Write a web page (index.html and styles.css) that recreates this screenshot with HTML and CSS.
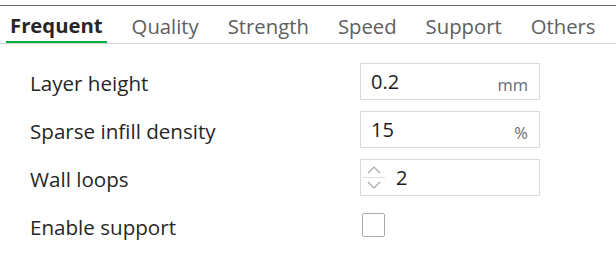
FILE: index.html
```html
<!DOCTYPE html>
<html>
<head>
<meta charset="utf-8">
<link rel="stylesheet" href="styles.css">
</head>
<body>
<div class="panel">
  <div class="topline"></div>
  <nav class="tabs">
    <div class="tab active">Frequent</div>
    <div class="tab">Quality</div>
    <div class="tab">Strength</div>
    <div class="tab">Speed</div>
    <div class="tab">Support</div>
    <div class="tab">Others</div>
  </nav>
  <div class="form">
    <div class="row">
      <div class="label">Layer height</div>
      <div class="field">
        <span class="value">0.2</span>
        <span class="unit">mm</span>
      </div>
    </div>
    <div class="row">
      <div class="label">Sparse infill density</div>
      <div class="field">
        <span class="value">15</span>
        <span class="unit">%</span>
      </div>
    </div>
    <div class="row">
      <div class="label">Wall loops</div>
      <div class="field spin">
        <div class="spinner">
          <svg class="arrow" width="14" height="8" viewBox="0 0 14 8"><path d="M1 7 L7 1 L13 7" fill="none" stroke="#a6a6a6" stroke-width="1.2"/></svg>
          <div class="sep"></div>
          <svg class="arrow" width="14" height="8" viewBox="0 0 14 8"><path d="M1 1 L7 7 L13 1" fill="none" stroke="#a6a6a6" stroke-width="1.2"/></svg>
        </div>
        <span class="value">2</span>
      </div>
    </div>
    <div class="row">
      <div class="label">Enable support</div>
      <div class="check"></div>
    </div>
  </div>
</div>
</body>
</html>
```

FILE: styles.css
```css
html, body {
  margin: 0;
  padding: 0;
  background: #ffffff;
}
body {
  font-family: "Open Sans", "Noto Sans", sans-serif;
  color: #262626;
}
.panel {
  width: 616px;
}
.topline {
  height: 5px;
  border-bottom: 1px solid #6a6a6a;
}
.tabs {
  display: flex;
  gap: 21px;
  padding-left: 6px;
  height: 37px;
  border-bottom: 1px solid #d4d4d4;
}
.tab {
  padding: 3px 4px 0;
  font-size: 20.3px;
  line-height: 34px;
  color: #5e5e5e;
  box-sizing: border-box;
  height: 37px;
  white-space: nowrap;
}
.tab.active {
  font-weight: 700;
  color: #262626;
  border-bottom: 2px solid #00ae42;
  line-height: 32px;
}
.form {
  padding-top: 13px;
}
.row {
  display: flex;
  align-items: center;
  height: 48px;
}
.label {
  width: 330px;
  padding: 3px 0 0 30px;
  font-size: 20.6px;
  color: #262626;
}
.field {
  width: 180px;
  height: 37px;
  box-sizing: border-box;
  border: 1px solid #dadada;
  display: flex;
  align-items: center;
  padding: 0 11px 0 10px;
}
.value {
  flex: 1;
  font-size: 20px;
  color: #1c1c1c;
}
.unit {
  font-size: 16.5px;
  color: #666c75;
  padding-top: 6px;
}
.field.spin {
  padding-left: 2px;
}
.spinner {
  width: 22px;
  display: flex;
  flex-direction: column;
  align-items: center;
  gap: 3px;
  margin-right: 11px;
}
.arrow {
  display: block;
}
.sep {
  width: 22px;
  height: 1px;
  background: #e2e2e2;
}
.check {
  margin-left: 2px;
  width: 23px;
  height: 24px;
  box-sizing: border-box;
  border: 1.5px solid #ababab;
  border-radius: 2px;
}
```
